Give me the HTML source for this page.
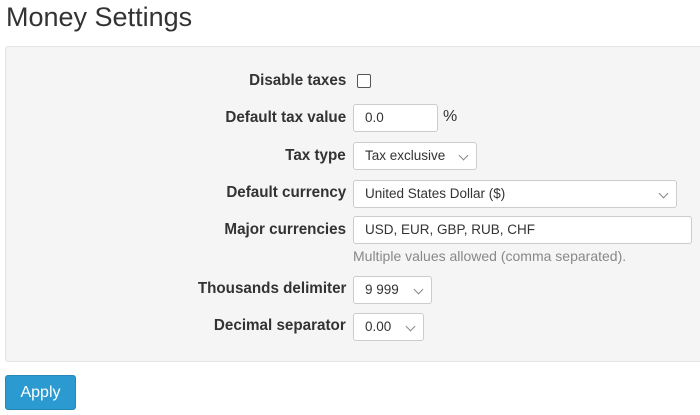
<!DOCTYPE html>
<html><head><style>
body{margin:0;width:700px;height:415px;background:#fff;font-family:"Liberation Sans",sans-serif;color:#333;position:relative;overflow:hidden}
.a{position:absolute}
h1{position:absolute;left:6px;top:0px;margin:0;font-weight:normal;font-size:27px;color:#333;line-height:34px}
.well{left:5px;top:46px;width:700px;height:316px;background:#f5f5f5;border:1px solid #e3e3e3;border-radius:3px;box-sizing:border-box}
.l{position:absolute;right:354px;font-weight:bold;font-size:16px;white-space:nowrap;transform:scaleX(.95);transform-origin:right center;color:#333}
.f{position:absolute;left:353px;background:#fff;border:1px solid #ccc;border-radius:3px;box-sizing:border-box;font-size:13.5px;padding-left:11px;line-height:26px;color:#333;white-space:nowrap}
.c{position:absolute;top:9px;width:6px;height:6px;border-right:1.5px solid #888;border-bottom:1.5px solid #888;transform:rotate(45deg)}
</style></head><body>
<h1>Money Settings</h1>
<div class="a well"></div>
<div class="l" style="top:72px">Disable taxes</div>
<div class="a" style="left:357px;top:74px;width:12px;height:12px;border:1px solid #555;border-radius:2px;background:#fff"></div>
<div class="l" style="top:109px">Default tax value</div>
<div class="f" style="top:104px;width:85px;height:28px">0.0</div>
<div class="a" style="left:443px;top:108px;font-size:16px">%</div>
<div class="l" style="top:147px">Tax type</div>
<div class="f" style="top:142px;width:124px;height:28px">Tax exclusive<span class="c" style="left:106px"></span></div>
<div class="l" style="top:184px">Default currency</div>
<div class="f" style="top:180px;width:324px;height:28px">United States Dollar ($)<span class="c" style="left:306px"></span></div>
<div class="l" style="top:221px">Major currencies</div>
<div class="f" style="top:216px;width:339px;height:28px">USD, EUR, GBP, RUB, CHF</div>
<div class="a" style="left:353px;top:248px;font-size:14px;color:#888">Multiple values allowed (comma separated).</div>
<div class="l" style="top:280px">Thousands delimiter</div>
<div class="f" style="top:276px;width:79px;height:28px">9 999<span class="c" style="left:61px"></span></div>
<div class="l" style="top:317px">Decimal separator</div>
<div class="f" style="top:313px;width:71px;height:28px">0.00<span class="c" style="left:53px"></span></div>
<div class="a" style="left:5px;top:375px;width:71px;height:35px;background:#2a9ad0;border:1px solid #2688b8;border-radius:3px;box-sizing:border-box;color:#fff;font-size:16px;text-align:center;line-height:33px">Apply</div>
</body></html>
